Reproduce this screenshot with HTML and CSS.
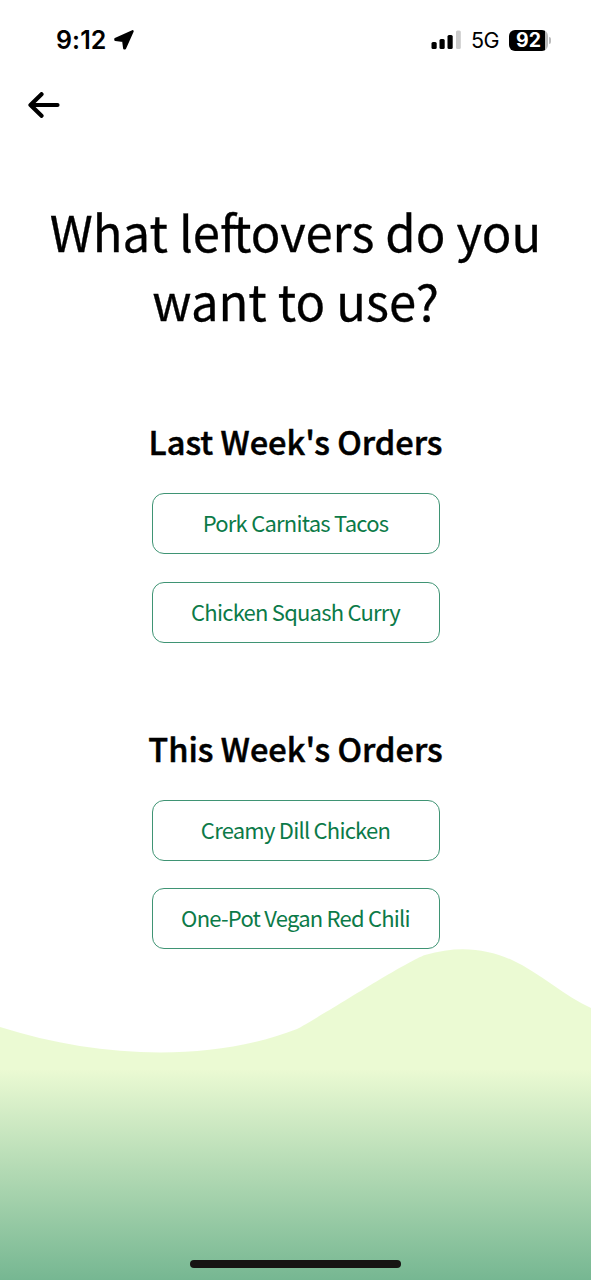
FILE: index.html
```html
<!DOCTYPE html>
<html lang="en">
<head>
  <meta charset="UTF-8">
  <meta name="viewport" content="width=device-width, initial-scale=1.0">
  <title>Leftovers</title>
  <link rel="stylesheet" href="styles.css">
</head>
<body>

  <div class="screen">
    <svg class="wave" viewBox="0 0 591 340" preserveAspectRatio="none" aria-hidden="true">
      <defs>
        <linearGradient id="waveFill" x1="0" y1="0" x2="0" y2="340" gradientUnits="userSpaceOnUse">
          <stop offset="0.38" stop-color="#ebfad3" />
          <stop offset="1" stop-color="#76b792" />
        </linearGradient>
      </defs>
      <path d="M0 87C100 119 213 122 297 89C312 82 405 22 425 15C459 5 487 9 512 20C540 33 566 57 591 68V340H0Z" fill="url(#waveFill)" />
    </svg>

    <div class="status-bar">
      <div class="status-left">
        <span class="time">9:12</span>
        <svg class="location" viewBox="0 0 20 20" width="20" height="20">
          <path d="M18.6 1.2L11 18.4L10.2 18.4L9.2 10.9L1.4 9.9L1.3 9Z" fill="#000" stroke="#000" stroke-width="2.2" stroke-linejoin="round" />
        </svg>
      </div>
      <div class="status-right">
        <svg class="signal" viewBox="0 0 30 20" width="30" height="20">
          <rect x="0.5" y="12" width="5.2" height="7" rx="1.5" />
          <rect x="8.5" y="9" width="5.2" height="10" rx="1.5" />
          <rect x="16.5" y="5" width="5.2" height="14" rx="1.5" />
          <rect x="25" y="0.5" width="4.8" height="18.5" rx="1.5" fill="#cbcbcb" />
        </svg>
        <span class="network">5G</span>
        <div class="battery">
          <span class="battery-level">92</span>
          <span class="battery-cap"></span>
        </div>
      </div>
    </div>

    <a class="back" href="#" aria-label="Back">
      <svg viewBox="0 0 32 26" width="32" height="26">
        <path d="M29.5 13H3M13.5 2.2L2.5 13L13.5 23.8" fill="none" stroke="#000" stroke-width="4.2" stroke-linecap="round" stroke-linejoin="round" />
      </svg>
    </a>

    <h1>What le<span class="tight">f</span>tovers do you<br>want to use?</h1>

    <section class="orders">
      <h2>Last Week's Orders</h2>
      <button class="meal">Pork Carnitas Tacos</button>
      <button class="meal">Chicken Squash Curry</button>
    </section>

    <section class="orders">
      <h2>This Week's Orders</h2>
      <button class="meal">Creamy Dill Chicken</button>
      <button class="meal">One-Pot Vegan Red Chili</button>
    </section>

    <div class="home-indicator"></div>
  </div>

</body>
</html>
```
FILE: styles.css
```css
* {
  box-sizing: border-box;
}

body {
  margin: 0;
  background: #fff;
  color: #000;
  font-family: "Noto Sans CJK SC", "Noto Sans", sans-serif;
}

.screen {
  position: relative;
  width: 591px;
  height: 1280px;
  overflow: hidden;
  display: flex;
  flex-direction: column;
  align-items: center;
}

/* hill behind the content */
.wave {
  position: absolute;
  left: 0;
  bottom: 0;
  width: 100%;
  height: 340px;
  z-index: -1;
}

.status-bar {
  width: 100%;
  height: 80px;
  padding: 0 40px 0 56px;
  display: flex;
  align-items: center;
  justify-content: space-between;
  font-family: Inter, sans-serif;
}

.status-left,
.status-right {
  display: flex;
  align-items: center;
}

.time {
  font-size: 25px;
  font-weight: 600;
  letter-spacing: 0.1px;
}

.location {
  margin-left: 7px;
}

.network {
  margin-left: 10px;
  font-size: 21.5px;
  letter-spacing: -0.5px;
}

.battery {
  margin-left: 10px;
  display: flex;
  align-items: center;
  gap: 1px;
}

.battery-level {
  width: 39px;
  height: 21px;
  border-radius: 6px;
  background: linear-gradient(to right, #000 92%, #bbb 92%);
  color: #fff;
  font-size: 19.5px;
  font-weight: 700;
  line-height: 20px;
  text-align: center;
}

.battery-cap {
  width: 2px;
  height: 7px;
  border-radius: 0 2px 2px 0;
  background: #bbb;
}

.back {
  align-self: flex-start;
  height: 26px;
  margin: 12px 0 0 28px;
}

.back svg {
  display: block;
}

h1 {
  margin: 78px 0 0;
  font-size: 49px;
  font-weight: 400;
  line-height: 69px;
  text-align: center;
  white-space: nowrap;
  -webkit-text-stroke: 0.3px #000;
}

/* pulls the f into the t so their crossbars join */
.tight {
  letter-spacing: -3px;
}

.orders {
  width: 288px;
  display: flex;
  flex-direction: column;
  align-items: center;
}

h1 + .orders {
  margin-top: 83px;
}

.orders + .orders {
  margin-top: 81px;
}

h2 {
  margin: 0 0 28px;
  font-size: 32.6px;
  font-weight: 500;
  line-height: 48px;
  white-space: nowrap;
  -webkit-text-stroke: 0.5px #000;
}

.meal {
  width: 288px;
  height: 61px;
  padding: 0 0 3px;
  border: 1px solid #3f9474;
  border-radius: 12px;
  background: #fff;
  color: #0b7a48;
  font-family: inherit;
  font-size: 22px;
  letter-spacing: -0.77px;
  white-space: nowrap;
}

.meal + .meal {
  margin-top: 27.6px;
}

.home-indicator {
  position: absolute;
  bottom: 12px;
  left: 190px;
  width: 211px;
  height: 8px;
  border-radius: 4px;
  background: #161412;
}
```
